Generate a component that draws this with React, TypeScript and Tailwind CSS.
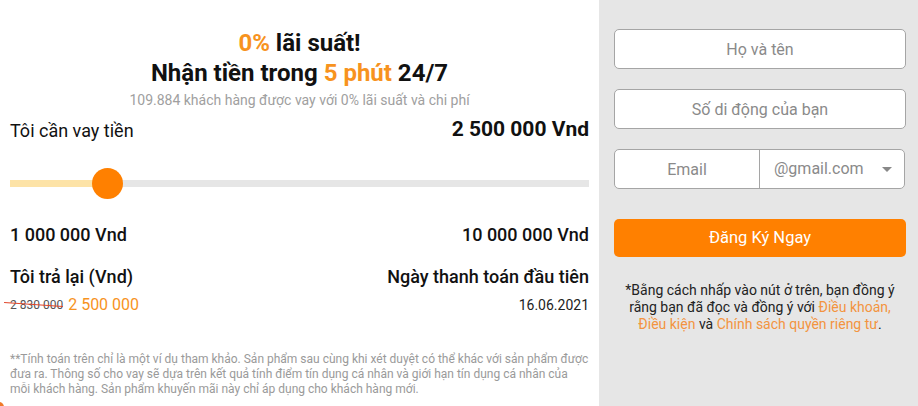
import { useState } from 'react';

const FONT = { fontFamily: 'Roboto, "Noto Sans", sans-serif' };

export default function App() {
  const [amount] = useState(2500000);
  const pct = ((amount - 1000000) / 9000000) * 100;

  return (
    <div className="w-[918px] h-[406px] flex overflow-hidden relative" style={FONT}>
      {/* Calculator */}
      <div className="w-[599px] h-full bg-white px-[10px] pt-[28px] text-[#111]">
        <h1 className="text-center text-[24px] leading-[30px] font-bold">
          <span className="text-[#f7931e]">0%</span> lãi suất!
          <br />
          Nhận tiền trong <span className="text-[#f7931e]">5 phút</span> 24/7
        </h1>
        <p className="mt-[4px] text-center text-[14px] leading-[16px] text-[#a0a0a0]">
          109.884 khách hàng được vay với 0% lãi suất và chi phí
        </p>

        <div className="mt-[12px] flex justify-between items-center h-[20px]">
          <span className="text-[18px]">Tôi cần vay tiền</span>
          <span className="text-[21px] font-bold">2 500 000 Vnd</span>
        </div>

        {/* Slider */}
        <div className="mt-[28px] relative h-[30px] flex items-center">
          <div className="w-full h-[7px] bg-[#e6e6e6] relative">
            <div className="h-full bg-[#fde3a7]" style={{ width: `${pct}%` }} />
          </div>
          <div
            className="absolute top-0 w-[31px] h-[31px] -ml-[15px] rounded-full bg-[#ff8000]"
            style={{ left: `${pct}%` }}
          />
        </div>

        <div className="mt-[27px] flex justify-between text-[18px] leading-[20px] font-medium">
          <span>1 000 000 Vnd</span>
          <span>10 000 000 Vnd</span>
        </div>

        <div className="mt-[22px] flex justify-between text-[18px] leading-[20px] font-medium">
          <span>Tôi trả lại (Vnd)</span>
          <span>Ngày thanh toán đầu tiên</span>
        </div>

        <div className="mt-[9px] flex justify-between items-center h-[18px]">
          <span className="flex items-center gap-[5px]">
            <span className="relative text-[12px] text-[#555]">
              2 830 000
              <span className="absolute left-[-6px] right-0 top-[46%] h-[1px] bg-[#e0452a] rotate-[4deg]" />
            </span>
            <span className="text-[16px] text-[#f7931e]">2 500 000</span>
          </span>
          <span className="text-[14px] text-[#222]">16.06.2021</span>
        </div>

        <p className="mt-[38px] text-[12px] leading-[15px] text-[#9a9a9a]">
          **Tính toán trên chỉ là một ví dụ tham khảo. Sản phẩm sau cùng khi xét duyệt có thể khác với sản phẩm được
          đưa ra. Thông số cho vay sẽ dựa trên kết quả tính điểm tín dụng cá nhân và giới hạn tín dụng cá nhân của
          mỗi khách hàng. Sản phẩm khuyến mãi này chỉ áp dụng cho khách hàng mới.
        </p>
      </div>

      {/* Registration form */}
      <div className="flex-1 h-full bg-[#e6e6e6] pl-[15px] pr-[12px] pt-[29px] flex flex-col">
        <input
          placeholder="Họ và tên"
          className="h-[40px] w-full rounded-[5px] border border-[#a5a5a5] bg-white text-center text-[16px] placeholder:text-[#8a8a8a] outline-none"
        />
        <input
          placeholder="Số di động của bạn"
          className="mt-[20px] h-[40px] w-full rounded-[5px] border border-[#a5a5a5] bg-white text-center text-[16px] placeholder:text-[#8a8a8a] outline-none"
        />
        <div className="mt-[20px] h-[40px] w-[291px] flex rounded-[5px] border border-[#a5a5a5] bg-white overflow-hidden">
          <input
            placeholder="Email"
            className="w-[145px] h-full text-center text-[16px] placeholder:text-[#8a8a8a] outline-none border-r border-[#a5a5a5]"
          />
          <div className="flex-1 flex items-center justify-between pl-[14px] pr-[12px] text-[16px] text-[#8a8a8a]">
            <span>@gmail.com</span>
            <svg width="10" height="5" viewBox="0 0 10 5">
              <path d="M0 0 L10 0 L5 5 Z" fill="#888" />
            </svg>
          </div>
        </div>
        <button className="mt-[30px] h-[38px] w-full rounded-[5px] bg-[#ff8000] text-white text-[16.5px]">
          Đăng Ký Ngay
        </button>

        <p className="mt-[25px] px-[6px] text-center text-[14px] leading-[17px] text-[#222]">
          *Bằng cách nhấp vào nút ở trên, bạn đồng ý rằng bạn đã đọc và đồng ý với{' '}
          <span className="text-[#f39440]">Điều khoản, Điều kiện</span> và{' '}
          <span className="text-[#f39440]">Chính sách quyền riêng tư</span>.
        </p>
      </div>

      <div className="absolute left-[-6px] bottom-[-6px] w-[10px] h-[10px] rounded-full bg-[#f07a2a]" />
    </div>
  );
}
